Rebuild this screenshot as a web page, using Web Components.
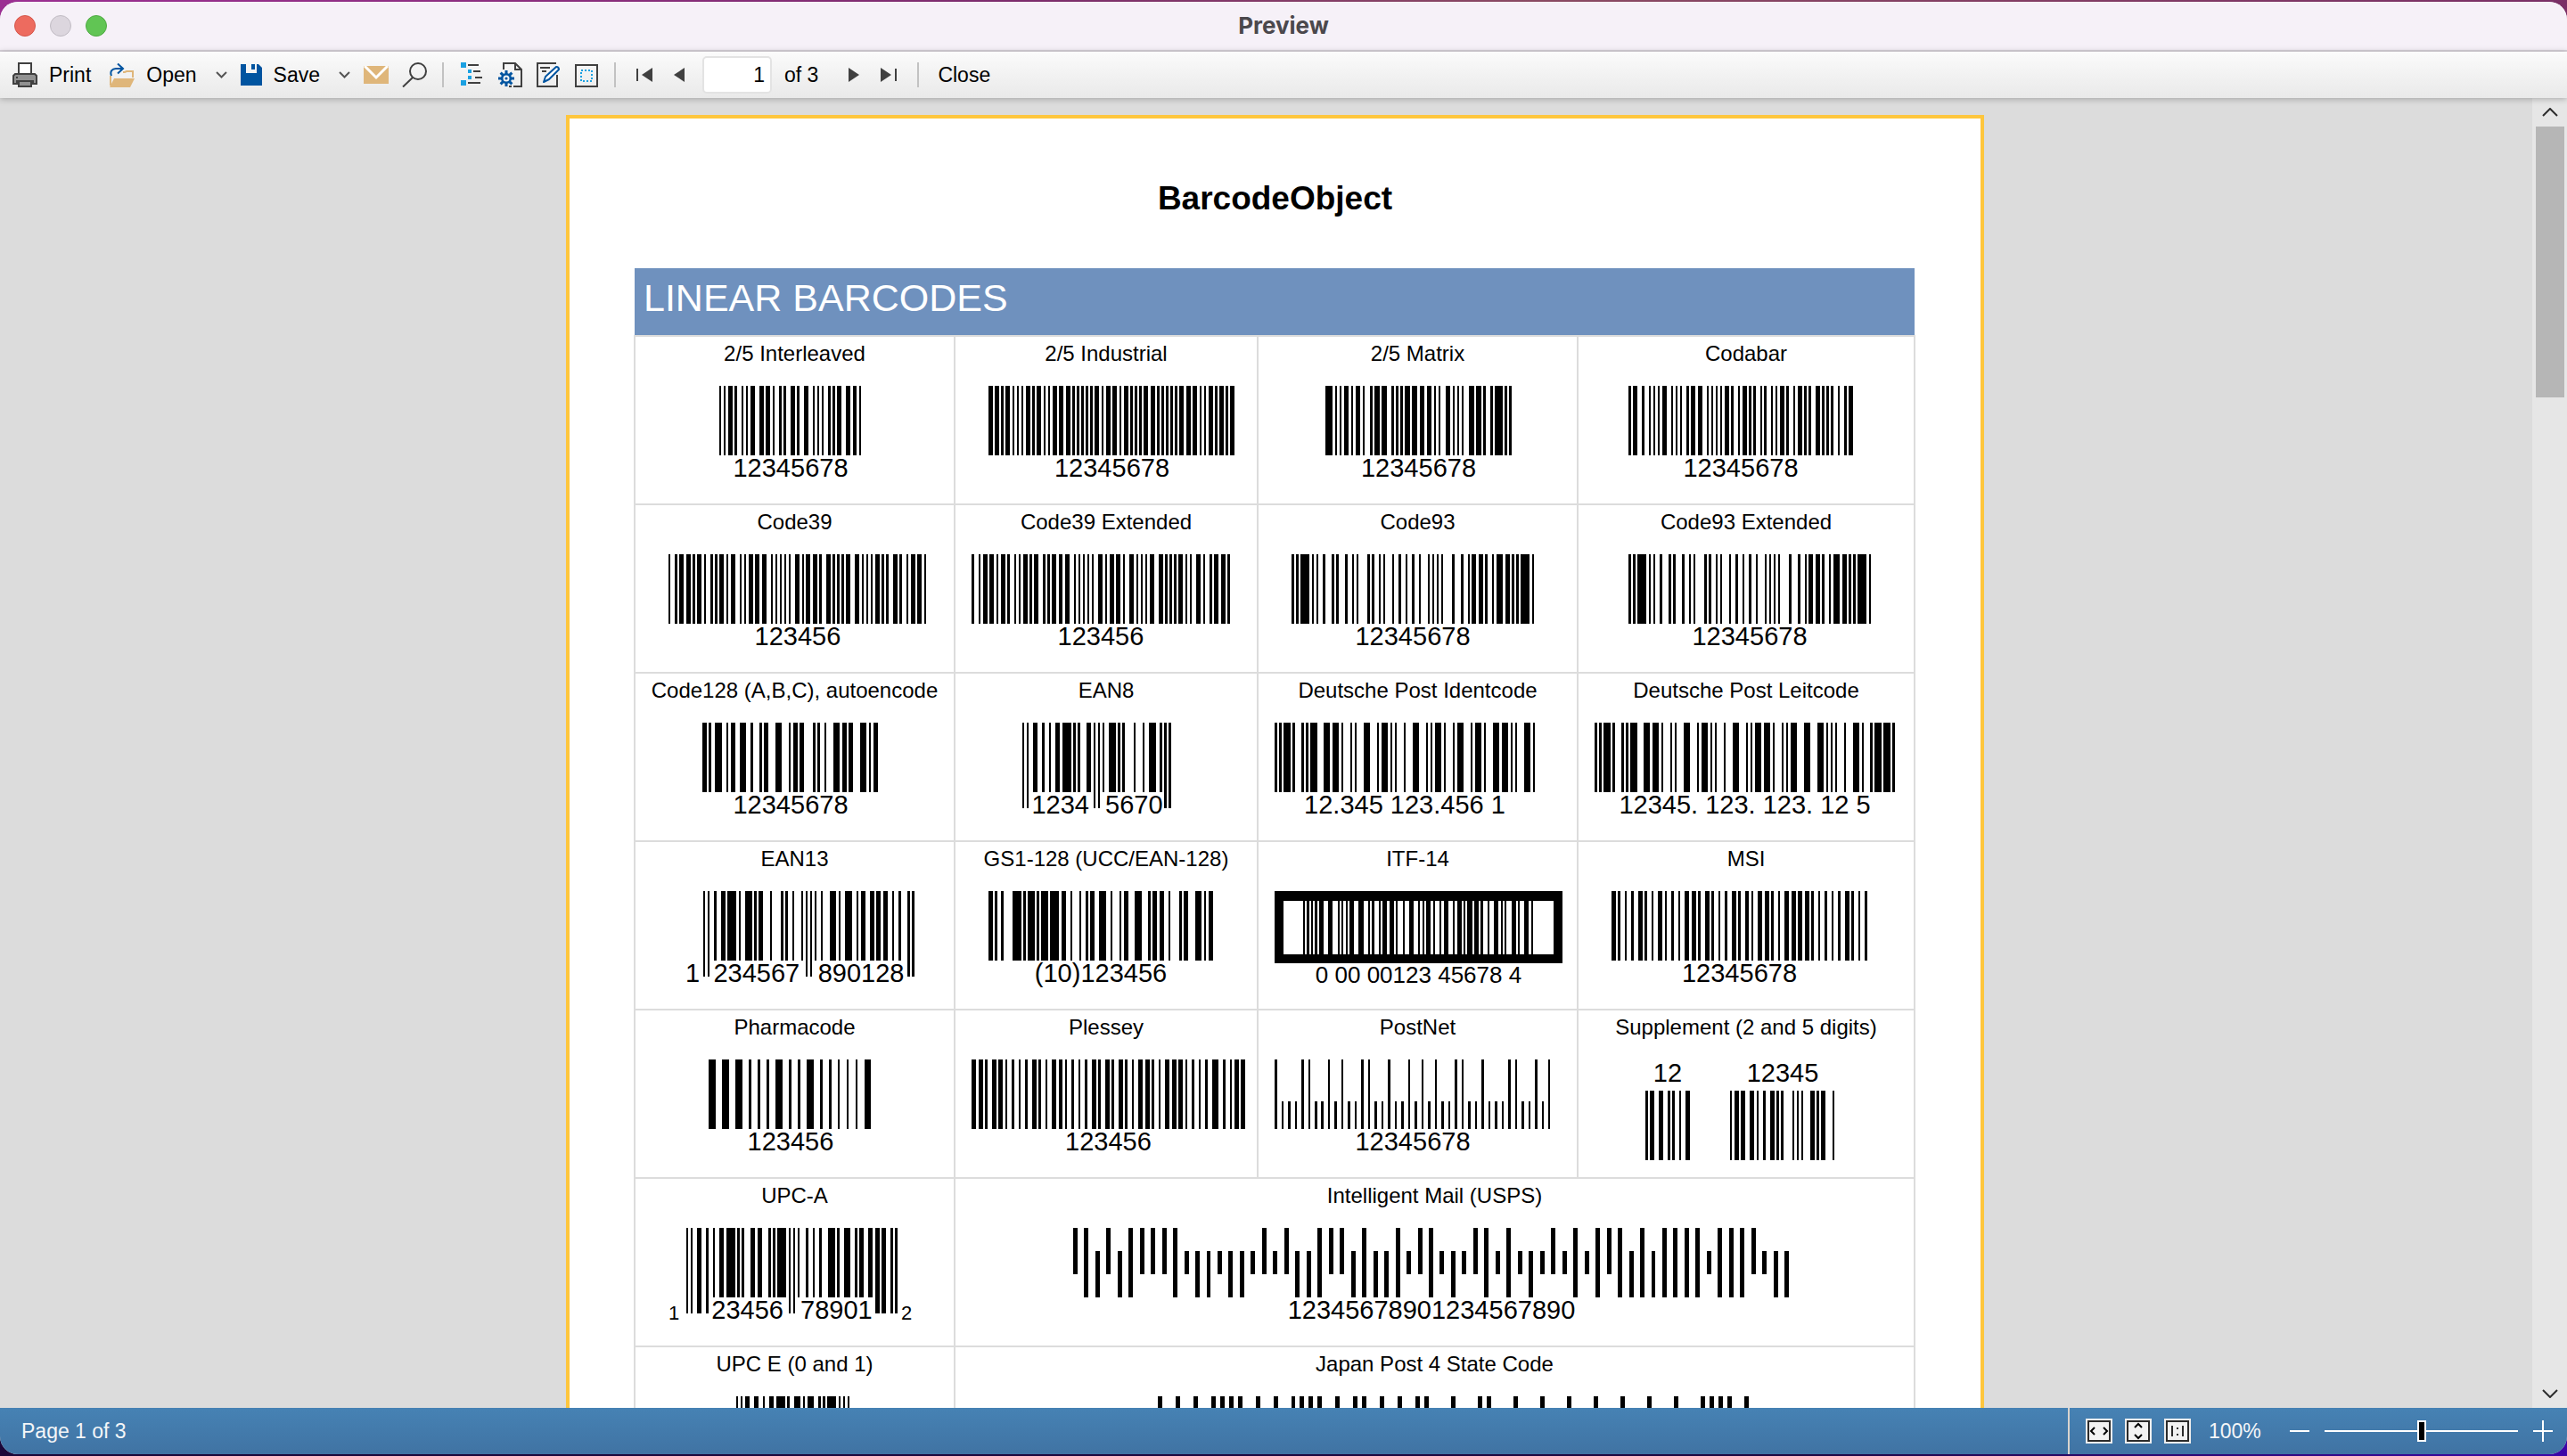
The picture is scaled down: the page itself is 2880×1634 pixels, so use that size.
<!DOCTYPE html>
<html lang="en">
<head>
<meta charset="utf-8">
<title>Preview</title>
<style>
html, body { height: 100%; margin: 0; }
body { background: linear-gradient(90deg, #1b0638, #1e0640 70%, #3c06a8); overflow: hidden; font-family: "Liberation Sans", Arial, sans-serif; color: #000; }
</style>
</head>
<body>
<preview-window></preview-window>

<script>
const make = (name, html, setup) => {
  const tpl = document.createElement('template');
  tpl.innerHTML = html;
  customElements.define(name, class extends HTMLElement {
    constructor() {
      super();
      this.attachShadow({ mode: 'open' }).append(tpl.content.cloneNode(true));
    }
    connectedCallback() { if (setup) setup(this, this.shadowRoot); }
  });
};

/* ---------- icons ---------- */
const D = '#404040', B = '#0054a0', T = '#dfb67a', S = '#1ba1e2';
const gear = (() => {
  let s = '';
  for (let i = 0; i < 8; i++) s += `<rect x="8.5" y="9" width="3" height="5" transform="rotate(${i * 45} 10 18)"/>`;
  return `<g fill="${B}">${s}</g><circle cx="10" cy="18" r="4.8" fill="#f4f4f4" stroke="${B}" stroke-width="2.6"/><circle cx="10" cy="18" r="1.6" fill="${B}"/>`;
})();
const ICONS = {
  print: [28, 28, `<path d="M7 14V1h14v13" fill="#fff" stroke="${D}" stroke-width="2"/><path d="M3 13h22l2 2v9h-4v-3H5v3H1v-9z" fill="#919191" stroke="${D}" stroke-width="2"/><rect x="7" y="21" width="14" height="6" fill="#919191" stroke="${D}" stroke-width="2"/><rect x="4" y="16" width="2" height="2" fill="${D}"/>`],
  open: [28, 28, `<path d="M1 15v11M15 11h2l2-1h7v7" fill="none" stroke="${T}" stroke-width="2"/><path d="M0 28l5-10h23l-5 10z" fill="${T}"/><path d="M2 15c-2-5 1-8 5-8h7M9 1.500l6 5.500l-6 5.500" fill="none" stroke="${B}" stroke-width="2"/>`],
  save: [24, 24, `<path d="M0 0h6v10h12V0h2l4 4v20H0z" fill="${B}"/><rect x="12" y="0" width="4" height="6" fill="${B}"/>`],
  mail: [28, 20, `<rect width="28" height="20" fill="${T}"/><path d="M1 0l13 13L27 0" fill="none" stroke="#fff" stroke-width="3"/>`],
  search: [28, 28, `<circle cx="18" cy="10" r="9" fill="none" stroke="${D}" stroke-width="2"/><path d="M12 17L1 27.500" stroke="${D}" stroke-width="2"/>`],
  tree: [28, 28, `<g fill="${S}"><rect x="2" y="0" width="6" height="6"/><rect x="10" y="8" width="4" height="4"/><rect x="10" y="15" width="4" height="4"/><rect x="2" y="20" width="6" height="6"/></g><g fill="${D}"><rect x="10" y="2" width="12" height="2"/><rect x="16" y="9" width="8" height="2"/><rect x="18" y="16" width="8" height="2"/><rect x="10" y="22" width="14" height="2"/></g>`],
  setup: [28, 28, `<path d="M7 8V1h13l7 7v19h-9" fill="none" stroke="${D}" stroke-width="2"/><path d="M20 1v7h7" fill="none" stroke="${D}" stroke-width="2"/>${gear}<path d="M13 27h3" stroke="${D}" stroke-width="2"/>`],
  edit: [28, 28, `<path d="M23 1H2v26h22V14" fill="none" stroke="${D}" stroke-width="2"/><path d="M5 6h11M7 10h5" stroke="${D}" stroke-width="2"/><path d="M9 22l2-6L23 5q3 0 3 3L15 19z" fill="#fff" stroke="${B}" stroke-width="2" stroke-linejoin="round"/>`],
  margins: [28, 28, `<rect x="2" y="3" width="24" height="24" fill="none" stroke="${D}" stroke-width="2"/><rect x="8" y="9" width="12" height="12" fill="none" stroke="${S}" stroke-width="2" stroke-dasharray="2 2"/>`],
  chevron: [13, 8, `<path d="M1 1l5.500 5.500L12 1" fill="none" stroke="#555" stroke-width="2"/>`],
  up: [18, 10, `<path d="M1 9l8-8l8 8" fill="none" stroke="#2c2c2c" stroke-width="2"/>`],
  down: [18, 10, `<path d="M1 1l8 8l8-8" fill="none" stroke="#2c2c2c" stroke-width="2"/>`],
  first: [28, 28, `<path d="M6 7h2v14H6zM24 6v16L12 14z" fill="${D}"/>`],
  prev: [28, 28, `<path d="M20 6v16L8 14z" fill="${D}"/>`],
  next: [28, 28, `<path d="M8 6v16l12-8z" fill="${D}"/>`],
  last: [28, 28, `<path d="M20 7h2v14h-2zM4 6v16l12-8z" fill="${D}"/>`],
  width: [30, 28, `<rect width="30" height="28" fill="#eee"/><rect x="3" y="3" width="24" height="22" fill="#f2f2f2" stroke="#2b2b2b" stroke-width="2"/><path d="M10 10l-4 4l4 4M20 10l4 4l-4 4" fill="none" stroke="#000" stroke-width="2"/>`],
  whole: [30, 28, `<rect width="30" height="28" fill="#eee"/><rect x="3" y="3" width="24" height="22" fill="#f2f2f2" stroke="#2b2b2b" stroke-width="2"/><path d="M11 10l4-4l4 4M11 18l4 4l4-4" fill="none" stroke="#000" stroke-width="2"/>`],
  actual: [30, 28, `<rect width="30" height="28" fill="#eee"/><rect x="3" y="3" width="24" height="22" fill="#f2f2f2" stroke="#2b2b2b" stroke-width="2"/><path d="M8 8h2v12H8zM20 8h2v12h-2zM14 10h2v2h-2zM14 17h2v2h-2z" fill="#2b2b2b"/>`],
  minus: [22, 24, `<path d="M0 12h22" stroke="#fff" stroke-width="2"/>`],
  plus: [22, 24, `<path d="M0 12h22M11 0v24" stroke="#fff" stroke-width="2"/>`]
};
make('ui-icon', `<style>:host{display:block;flex:none}svg{display:block}</style>`, (el, root) => {
  const [w, h, body] = ICONS[el.getAttribute('name')];
  root.innerHTML += `<svg width="${w}" height="${h}" viewBox="0 0 ${w} ${h}" aria-hidden="true">${body}</svg>`;
});

/* ---------- barcode encoders: each returns [ [start, width] … ] in modules ---------- */
const runs = (widths, at = 0) => {
  const bars = []; let x = at;
  widths.forEach((w, i) => { if (i % 2 === 0) bars.push([x, w]); x += w; });
  return { bars, end: x };
};
const num = s => [...s].map(Number);
const T25 = ['00110', '10001', '01001', '11000', '00101', '10100', '01100', '00011', '10010', '01010'];
const T39 = { '0': '000110100', '1': '100100001', '2': '001100001', '3': '101100000', '4': '000110001', '5': '100110000', '6': '001110000', '7': '000100101', '8': '100100100', '9': '001100100', L: '001000011', '*': '010010100' };
const TCB = { '1': '0000110', '2': '0001001', '3': '1100000', '4': '0010010', '5': '1000010', '6': '0100001', '7': '0100100', '8': '0110000', A: '0011010', B: '0101001' };
const T93 = { '1': '111213', '2': '111312', '3': '111411', '4': '121113', '5': '121212', '6': '121311', '7': '111114', '8': '131211', Q: '212112', '+': '113121', '*': '111141' };
const T128 = { 10: '221312', 12: '112232', 34: '131123', 47: '133121', 56: '331121', 61: '221411', 78: '241112', 99: '113141', FNC1: '411131', B: '211214', C: '211232', STOP: '2331112' };
const EAN = ['3211', '2221', '2122', '1411', '1132', '1231', '1114', '1312', '1213', '3112'];
const L = d => num(EAN[d]), G = d => L(d).reverse();
const bits = (s, r) => [...s].map(c => c === '1' ? r : 1);
const interleaved = (t, r) => {
  const w = [1, 1, 1, 1];
  for (let i = 0; i < t.length; i += 2)
    for (let j = 0; j < 5; j++) w.push(T25[t[i]][j] === '1' ? r : 1, T25[t[i + 1]][j] === '1' ? r : 1);
  return runs([...w, r, 1, 1]);
};
const code93 = t => runs(num([...('*' + t + 'Q+*')].map(c => T93[c]).join('') + '1'));
const code39 = t => runs([...('*' + t + 'L*')].flatMap(c => [...bits(T39[c], 2), 1]).slice(0, -1));
const code128 = keys => runs(num(keys.map(k => T128[k]).join('')));
/* a bar list from edges, with the bars inside the long ranges drawn to guard height */
const guarded = (widths, long, lead = 0, trail = 0) => {
  const r = runs(widths);
  r.bars = r.bars.map(([x, w]) => [x + lead, w, 0, long.some(([a, b]) => x >= a && x < b) ? 96 : 78]);
  r.end += lead + trail;
  return r;
};
const ENC = {
  interleaved: t => interleaved(t, 2),
  industrial: t => runs([2, 1, 2, 1, 1, 1, ...[...t].flatMap(d => [...T25[d]].flatMap(b => [b === '1' ? 2 : 1, 1])), 2, 1, 1, 1, 2]),
  matrix: t => runs([27 / 8, 1, 1, 1, 1, 1, ...[...t].flatMap(d => [...bits(T25[d], 9 / 4), 1]), 27 / 8, 1, 1, 1, 1]),
  codabar: t => runs([...('A' + t + 'B')].flatMap(c => [...bits(TCB[c], 2), 1]).slice(0, -1)),
  code39, code93,
  code128: () => code128(['C', 12, 34, 56, 78, 47, 'STOP']),
  gs1: () => code128(['B', 'FNC1', 99, 10, 12, 34, 56, 61, 'STOP']),
  post: t => interleaved(t, 3),
  itf: t => interleaved(t, 9 / 4),
  ean8: t => guarded([1, 1, 1, ...[...t.slice(0, 4)].flatMap(L), 1, 1, 1, 1, 1, ...[...t.slice(4)].flatMap(L), 1, 1, 1], [[0, 3], [32, 35], [64, 67]]),
  ean13: t => guarded([1, 1, 1, ...[...t.slice(1, 7)].flatMap((d, i) => 'LLGLGG'[i] === 'L' ? L(d) : G(d)), 1, 1, 1, 1, 1, ...[...t.slice(7)].flatMap(L), 1, 1, 1], [[0, 3], [46, 49], [92, 95]], 8),
  upca: t => guarded([1, 1, 1, ...[...t.slice(0, 6)].flatMap(L), 1, 1, 1, 1, 1, ...[...t.slice(6)].flatMap(L), 1, 1, 1], [[0, 10], [46, 49], [85, 95]], 8, 8),
  upce: () => runs([1, 1, 1, ...G(1), ...L(2), ...L(3), ...G(4), ...G(5), ...L(6), 1, 1, 1, 1, 1, 1]),
  msi: t => runs([2, 1, ...[...(t + '2')].flatMap(d => [...(+d).toString(2).padStart(4, '0')].flatMap(b => b === '1' ? [2, 1] : [1, 2])), 1, 2, 1]),
  pharma: t => runs([...(+t + 1).toString(2).slice(1)].flatMap(b => [b === '1' ? 3 : 1, 3]), 3),
  plessey: t => {
    const data = [...t].map(d => [...(+d).toString(2).padStart(4, '0')].reverse().join('')).join('');
    return runs([...[...('1101' + data + '01110000')].flatMap(b => b === '1' ? [2, 1] : [1, 2]), 3, 2, 1, 2, 1, 1, 2, 1, 2]);
  },
  postnet: t => {
    const P = ['11000', '00011', '00101', '00110', '01001', '01010', '01100', '10001', '10010', '10100'];
    const s = '1' + [...t].map(d => P[d]).join('') + '1';
    return { bars: [...s].map((b, i) => [i * 3, 1, b === '1' ? 0 : 47, 78]), end: s.length * 3 - 2 };
  },
  supp2: () => runs([1, 1, 2, ...L(1), 1, 1, ...L(2)]),
  supp5: () => runs([1, 1, 2, ...G(1), 1, 1, ...L(2), 1, 1, ...G(3), 1, 1, ...L(4), 1, 1, ...L(5)]),
  usps: () => fourState('AFDADFAAAFTDDTDDTATADDFAADFDDFTAFTDTAFTFTDTATFTFAFDFDFFFFTFFFATDD', 5, 2),
  japan: () => {
    const up = [0, 2, 4, 6, 7, 8, 9, 11, 13, 15, 16, 17, 18, 20, 22, 23, 25, 27, 29, 30, 33, 36, 37, 40, 43, 46, 49, 52, 55, 58, 61, 62, 63, 64, 66];
    return fourState(Array.from({ length: 67 }, (_, i) => up.includes(i) ? 'A' : 'T').join(''), 4, 2);
  }
};
function fourState(s, pitch, w) {
  const span = { A: [0, 52], F: [0, 78], T: [26, 52], D: [26, 78] };
  return { bars: [...s].map((c, i) => [i * pitch, w, ...span[c]]), end: (s.length - 1) * pitch + w };
}

/* where the first bar falls inside its device pixel, as a fraction */
const PHASE = { industrial: 0.02, code128: 0.02, gs1: 0.02, code93: 0.9, codabar: 0.8, plessey: 0.7, post: 0.6, postnet: 0.6, supp2: 0.6 };

/* <bar-code kind value indent>: bars, with the slotted digits under (or over) them */
make('bar-code', `<style>
:host { display: block; margin-left: calc(var(--indent, 0) * 19px - var(--cell-line, 0px)); }
:host([over]) figure { display: flex; flex-direction: column-reverse; gap: 5px; }
:host([over]) .digits { line-height: 30px; }
:host([guards]) .digits { margin-top: -18px; }
figure { margin: 0; width: max-content; }
svg { display: block; shape-rendering: crispEdges; }
.frame { border: solid #000; border-width: 11px 10px 10px; padding: 0 22px; height: 60px; box-sizing: content-box; overflow: hidden; }
.digits { display: flex; justify-content: center; font-size: 29px; line-height: 28px; white-space: pre; }
:host([kind="itf"]) .digits { font-size: 26px; line-height: 26px; }
</style><figure><div class="art"></div><figcaption class="digits"><slot></slot></figcaption></figure>`, (el, root) => {
  const kind = el.getAttribute('kind');
  const unit = kind === 'itf' ? 2.28 : 2.495;
  const phase = el.hasAttribute('extended') ? 0.7 : PHASE[kind] ?? 0.3;
  const { bars, end } = ENC[kind](el.getAttribute('value') || '');
  const w = Math.ceil(end * unit), h = el.hasAttribute('guards') ? 96 : 78;
  const px = v => Math.floor(phase + v * unit);
  const d = bars.map(([x, bw, top = 0, bottom = 78]) => `M${px(x)} ${top}H${px(x + bw)}V${bottom}H${px(x)}z`).join('');
  const art = root.querySelector('.art');
  if (kind === 'itf') art.className = 'frame';
  art.innerHTML = `<svg width="${w}" height="${h}" viewBox="0 0 ${w} ${h}" aria-hidden="true"><path d="${d}"/></svg>`;
  el.style.setProperty('--indent', el.getAttribute('indent'));
});

/* a run of digits that spans a number of modules */
make('digit-group', `<style>
:host { display: block; flex: var(--span) 1 0; width: 0; text-align: center; }
:host([start]) { text-align: left; }
:host([small]) { font-size: 22px; line-height: 36px; }
</style><slot></slot>`, el => el.style.setProperty('--span', el.getAttribute('span')));

/* ---------- report page ---------- */
make('report-page', `<style>
:host { display: block; box-sizing: border-box; width: 1591px; flex: none; padding: 72px 72px 0; background: #fff; border: 4px solid #fec63d; border-bottom: 0; }
h1 { margin: 0; font-size: 37px; line-height: 36px; text-align: center; height: 96px; }
table { width: 1438px; border-collapse: collapse; table-layout: fixed; --cell-line: 1px; }
th { height: 76px; box-sizing: border-box; padding: 0 10px 10px; background: #6f91be; color: #fff; font-weight: 400; font-size: 43px; line-height: 48px; text-align: left; border: 0; }
td { height: 189px; box-sizing: border-box; padding: 5px 0 0; border: 2px solid #dcdcdc; vertical-align: top; font-size: 24px; line-height: 28px; text-align: center; }
td > bar-code, td > .pair { margin-top: 22px; text-align: left; }
.pair { display: flex; gap: 46px; }
</style>
<h1>BarcodeObject</h1>
<table>
<colgroup><col style="width:359px"><col style="width:340px"><col style="width:359px"><col></colgroup>
<thead><tr><th colspan="4" scope="colgroup">LINEAR BARCODES</th></tr></thead>
<tbody>
<tr>
<td>2/5 Interleaved<bar-code kind="interleaved" value="12345678" indent="5">12345678</bar-code></td>
<td>2/5 Industrial<bar-code kind="industrial" value="12345678" indent="2">12345678</bar-code></td>
<td>2/5 Matrix<bar-code kind="matrix" value="12345678" indent="4">12345678</bar-code></td>
<td>Codabar<bar-code kind="codabar" value="12345678" indent="3">12345678</bar-code></td>
</tr>
<tr>
<td>Code39<bar-code kind="code39" value="123456" indent="2">123456</bar-code></td>
<td>Code39 Extended<bar-code kind="code39" value="123456" indent="1" extended>123456</bar-code></td>
<td>Code93<bar-code kind="code93" value="12345678" indent="2">12345678</bar-code></td>
<td>Code93 Extended<bar-code kind="code93" value="12345678" indent="3">12345678</bar-code></td>
</tr>
<tr>
<td>Code128 (A,B,C), autoencode<bar-code kind="code128" indent="4">12345678</bar-code></td>
<td>EAN8<bar-code kind="ean8" value="12345670" indent="4" guards><digit-group span="3"></digit-group><digit-group span="28">1234</digit-group><digit-group span="5"></digit-group><digit-group span="28">5670</digit-group><digit-group span="3"></digit-group></bar-code></td>
<td>Deutsche Post Identcode<bar-code kind="post" value="123451234561" indent="1">12.345 123.456 1</bar-code></td>
<td>Deutsche Post Leitcode<bar-code kind="post" value="12345123123125" indent="1">12345. 123. 123. 12 5</bar-code></td>
</tr>
<tr>
<td>EAN13<bar-code kind="ean13" value="1234567890128" indent="3" guards><digit-group span="8" start>1</digit-group><digit-group span="3"></digit-group><digit-group span="42">234567</digit-group><digit-group span="5"></digit-group><digit-group span="42">890128</digit-group><digit-group span="3"></digit-group></bar-code></td>
<td>GS1-128 (UCC/EAN-128)<bar-code kind="gs1" indent="2">(10)123456</bar-code></td>
<td>ITF-14<bar-code kind="itf" value="00000123456784" indent="1">0 00 00123 45678 4</bar-code></td>
<td>MSI<bar-code kind="msi" value="12345678" indent="2">12345678</bar-code></td>
</tr>
<tr>
<td>Pharmacode<bar-code kind="pharma" value="123456" indent="4">123456</bar-code></td>
<td>Plessey<bar-code kind="plessey" value="123456" indent="1">123456</bar-code></td>
<td>PostNet<bar-code kind="postnet" value="12345678" indent="1">12345678</bar-code></td>
<td>Supplement (2 and 5 digits)<div class="pair"><bar-code kind="supp2" indent="4" over>12</bar-code><bar-code kind="supp5" indent="0" over>12345</bar-code></div></td>
</tr>
<tr>
<td>UPC-A<bar-code kind="upca" value="123456789012" indent="2" guards><digit-group span="8" small start>1</digit-group><digit-group span="10"></digit-group><digit-group span="35">23456</digit-group><digit-group span="5"></digit-group><digit-group span="35">78901</digit-group><digit-group span="10"></digit-group><digit-group span="8" small>2</digit-group></bar-code></td>
<td colspan="3">Intelligent Mail (USPS)<bar-code kind="usps" indent="7">12345678901234567890</bar-code></td>
</tr>
<tr>
<td>UPC E (0 and 1)<bar-code kind="upce" indent="6"></bar-code></td>
<td colspan="3">Japan Post 4 State Code<bar-code kind="japan" indent="12"></bar-code></td>
</tr>
</tbody>
</table>`);

/* ---------- window chrome ---------- */
make('title-bar', `<style>
:host { display: flex; align-items: center; height: 56px; padding: 0 16px; background: #f6f1f8; border-bottom: 2px solid #d8d2da; box-sizing: border-box; }
.lights { display: flex; gap: 16px; flex: 1; }
button { width: 24px; height: 24px; padding: 0; border-radius: 50%; border: 1px solid #d5564b; background: #ed6b5f; }
button:nth-child(2) { background: #dcd6de; border-color: #c0bbc3; }
button:nth-child(3) { background: #61c554; border-color: #4fa943; }
h2 { margin: 0; font: 700 26px/28px Inter, sans-serif; color: #4b484c; }
.end { flex: 1; }
</style><div class="lights"><button aria-label="Close window"></button><button aria-label="Minimize"></button><button aria-label="Zoom window"></button></div><h2>Preview</h2><div class="end"></div>`);

make('tool-bar', `<style>
:host { display: flex; align-items: center; gap: 15px; height: 52px; padding: 0 14px; box-sizing: border-box; background: linear-gradient(#fbfbfb, #e9e9e9); font-size: 23px; line-height: 28px; position: relative; z-index: 1; box-shadow: 0 1px 7px rgba(0,0,0,.28); }
button { display: flex; align-items: center; gap: 13px; height: 36px; padding: 0; border: 0; background: none; font: inherit; color: #000; }
.text { padding-right: 6px; }
.close { padding-left: 4px; }
hr { width: 2px; height: 28px; margin: 0 2px; border: 0; background: #c2c2c2; }
.pager { display: flex; align-items: center; gap: 12px; }
input { width: 78px; height: 42px; box-sizing: border-box; border: 2px solid #e3e3e3; border-radius: 5px; background: #fff; padding: 0 6px; font: inherit; text-align: right; color: #000; }
label { padding: 0 14px 0 2px; }
</style>
<button class="text"><ui-icon name="print"></ui-icon>Print</button>
<button class="text"><ui-icon name="open"></ui-icon>Open</button>
<button aria-label="Open menu"><ui-icon name="chevron"></ui-icon></button>
<button class="text"><ui-icon name="save"></ui-icon>Save</button>
<button aria-label="Save menu"><ui-icon name="chevron"></ui-icon></button>
<button aria-label="Send by mail"><ui-icon name="mail"></ui-icon></button>
<button aria-label="Find"><ui-icon name="search"></ui-icon></button>
<hr>
<button aria-label="Outline"><ui-icon name="tree"></ui-icon></button>
<button aria-label="Page setup"><ui-icon name="setup"></ui-icon></button>
<button aria-label="Edit page"><ui-icon name="edit"></ui-icon></button>
<button aria-label="Margins"><ui-icon name="margins"></ui-icon></button>
<hr>
<div class="pager">
<button aria-label="First page"><ui-icon name="first"></ui-icon></button>
<button aria-label="Previous page"><ui-icon name="prev"></ui-icon></button>
<input id="page" value="1"><label for="page">of 3</label>
<button aria-label="Next page"><ui-icon name="next"></ui-icon></button>
<button aria-label="Last page"><ui-icon name="last"></ui-icon></button>
</div>
<hr>
<button class="close">Close</button>`);

make('scroll-rail', `<style>
:host { display: flex; flex-direction: column; align-items: center; width: 39px; flex: none; background: #e6e6e6; }
button { display: grid; place-items: center; width: 100%; height: 32px; border: 0; padding: 0; background: none; }
.track { flex: 1; width: 32px; }
.thumb { height: 304px; background: #b6b6b6; }
</style><button aria-label="Scroll up"><ui-icon name="up"></ui-icon></button><div class="track"><div class="thumb"></div></div><button aria-label="Scroll down"><ui-icon name="down"></ui-icon></button>`);

make('status-bar', `<style>
:host { display: flex; align-items: center; height: 52px; padding: 0 16px 0 24px; background: linear-gradient(#4682b4, #4073a3); color: #f4f6f8; font-size: 23px; line-height: 28px; }
.page { flex: 1; }
.side { display: flex; align-items: center; height: 100%; gap: 14px; padding-left: 18px; border-left: 2px solid #d9d4ce; }
button { display: block; padding: 0; border: 0; background: none; }
output { width: 62px; padding: 0 15px 0 6px; }
.zoom { display: flex; align-items: center; gap: 17px; }
input { appearance: none; width: 217px; height: 24px; margin: 0; background: linear-gradient(#fff, #fff) center / 100% 2px no-repeat; }
input::-webkit-slider-thumb { appearance: none; width: 10px; height: 24px; background: #000; border: 2px solid #fff; box-sizing: border-box; }
</style>
<span class="page">Page 1 of 3</span>
<div class="side">
<button aria-label="Page width"><ui-icon name="width"></ui-icon></button>
<button aria-label="Whole page"><ui-icon name="whole"></ui-icon></button>
<button aria-label="Actual size"><ui-icon name="actual"></ui-icon></button>
<output>100%</output>
<div class="zoom"><button aria-label="Zoom out"><ui-icon name="minus"></ui-icon></button><input type="range" aria-label="Zoom" min="0" max="100" value="50"><button aria-label="Zoom in"><ui-icon name="plus"></ui-icon></button></div>
</div>`);

make('preview-window', `<style>
:host { display: flex; flex-direction: column; height: 100vh; box-sizing: border-box; padding: 2px 0; background: linear-gradient(90deg, #9b2f92, #7c2c6c 40%, #8a4a62 60%, #7a2f66) top / 100% 24px no-repeat; }
.frame { flex: 1; min-height: 0; display: flex; flex-direction: column; border-radius: 20px; overflow: hidden; background: #dcdcdc; }
main { flex: 1; min-height: 0; display: flex; background: #dcdcdc; }
.view { flex: 1; min-width: 0; overflow: hidden; display: flex; justify-content: center; align-items: flex-start; padding: 19px 0 0 20px; }
</style>
<div class="frame"><title-bar></title-bar><tool-bar></tool-bar><main><div class="view"><report-page></report-page></div><scroll-rail></scroll-rail></main><status-bar></status-bar></div>`);
</script>
</body>
</html>
